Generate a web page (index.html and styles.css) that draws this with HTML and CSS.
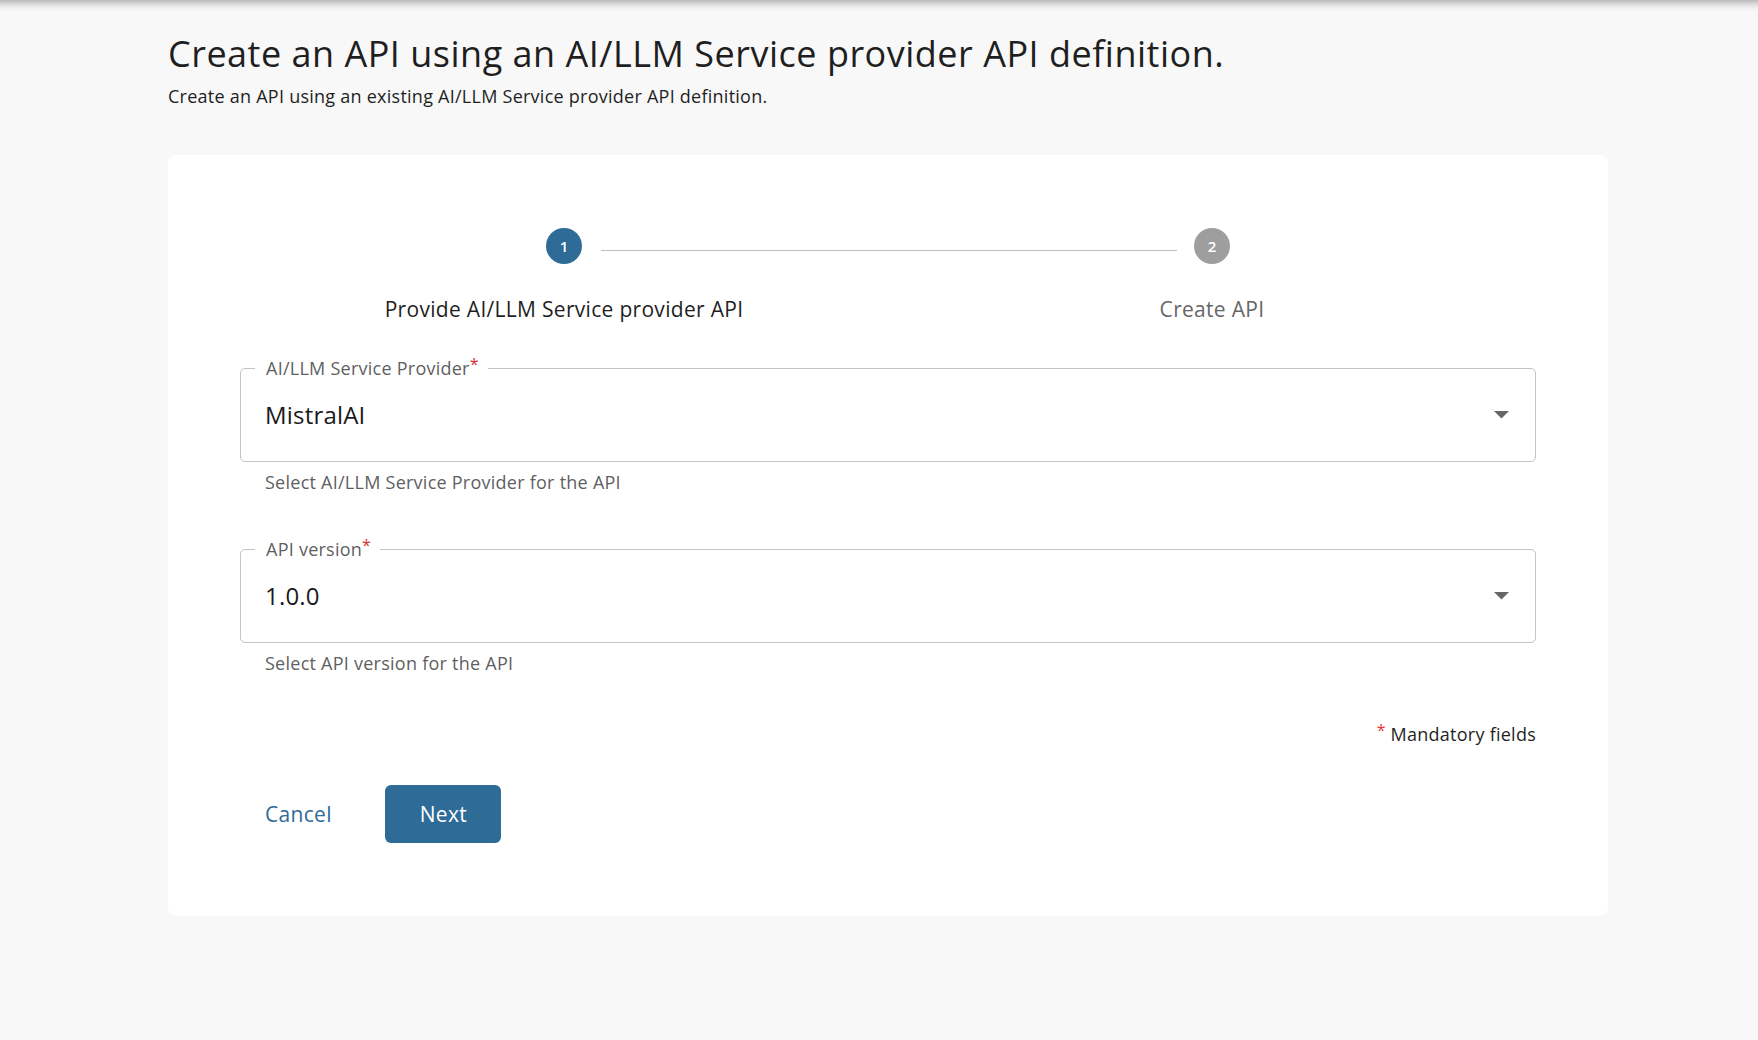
FILE: index.html
```html
<!DOCTYPE html>
<html lang="en">
<head>
<meta charset="utf-8">
<title>Create an API using an AI/LLM Service provider API definition</title>
<link rel="stylesheet" href="styles.css">
</head>
<body>
<div class="top-shade"></div>
<main class="page">
  <h1 class="title">Create an API using an AI/LLM Service provider API definition.</h1>
  <p class="subtitle">Create an API using an existing AI/LLM Service provider API definition.</p>

  <section class="card">
    <div class="stepper">
      <div class="step-icons">
        <span class="spacer"></span>
        <span class="step-circle active">1</span>
        <span class="connector"></span>
        <span class="step-circle">2</span>
        <span class="spacer"></span>
      </div>
      <div class="step-labels">
        <span class="step-label active">Provide AI/LLM Service provider API</span>
        <span class="step-label">Create API</span>
      </div>
    </div>

    <form class="form">
      <div class="field">
        <fieldset class="outline">
          <legend class="field-label">AI/LLM Service Provider<span class="req">*</span></legend>
          <div class="select-row">
            <span class="select-value">MistralAI</span>
            <svg class="caret" width="15" height="8" viewBox="0 0 15 8"><path d="M0 0 H15 L7.5 7.5 Z" fill="#666"/></svg>
          </div>
        </fieldset>
        <p class="helper">Select AI/LLM Service Provider for the API</p>
      </div>

      <div class="field">
        <fieldset class="outline">
          <legend class="field-label">API version<span class="req">*</span></legend>
          <div class="select-row">
            <span class="select-value">1.0.0</span>
            <svg class="caret" width="15" height="8" viewBox="0 0 15 8"><path d="M0 0 H15 L7.5 7.5 Z" fill="#666"/></svg>
          </div>
        </fieldset>
        <p class="helper">Select API version for the API</p>
      </div>

      <p class="mandatory"><span class="req-note">*</span> Mandatory fields</p>

      <div class="actions">
        <button type="button" class="btn-text">Cancel</button>
        <button type="button" class="btn-primary">Next</button>
      </div>
    </form>
  </section>
</main>
</body>
</html>
```

FILE: styles.css
```css
* { box-sizing: border-box; }

html, body {
  margin: 0;
  padding: 0;
  background: #f8f8f8;
  font-family: "Open Sans", "Noto Sans", "Liberation Sans", sans-serif;
  color: #212121;
}

.top-shade {
  height: 12px;
  background: linear-gradient(to bottom, #b9b9b9 0%, #dcdcdc 35%, #f1f1f1 70%, #f8f8f8 100%);
}

.page {
  padding: 22px 150px 0 168px;
}

.title {
  margin: 0;
  font-size: 36px;
  line-height: 40px;
  letter-spacing: 0.5px;
  font-weight: 400;
  color: #1f1f1f;
}

.subtitle {
  margin: 10px 0 0;
  font-size: 18px;
  line-height: 24px;
  letter-spacing: 0.25px;
  color: #1f1f1f;
}

.card {
  margin-top: 47px;
  background: #fff;
  border-radius: 8px;
  padding: 73px 72px 73px 72px;
}

/* stepper */
.step-icons {
  display: grid;
  grid-template-columns: 1fr 36px 2fr 36px 1fr;
  align-items: start;
}

.step-circle {
  width: 36px;
  height: 36px;
  border-radius: 50%;
  background: #9e9e9e;
  color: #fff;
  font-size: 15px;
  font-weight: 600;
  display: flex;
  align-items: center;
  justify-content: center;
}

.step-circle.active {
  background: #2e6b97;
}

.connector {
  height: 1px;
  background: #bdbdbd;
  margin: 22px 17px 0 19px;
}

.step-labels {
  display: grid;
  grid-template-columns: 1fr 1fr;
  margin-top: 31px;
}

.step-label {
  text-align: center;
  font-size: 21px;
  line-height: 28px;
  letter-spacing: 0.3px;
  color: #666;
}

.step-label.active {
  color: #1f1f1f;
}

/* form */
.form {
  margin-top: 33px;
}

.field + .field {
  margin-top: 43px;
}

.outline {
  margin: 0;
  padding: 0 16px 0 14px;
  border: 1px solid #c4c4c4;
  border-radius: 5px;
  min-width: 0;
}

.field-label {
  padding: 0 9px 0 11px;
  font-size: 18px;
  line-height: 24px;
  letter-spacing: 0.25px;
  color: #5f5f5f;
}

.req {
  color: #d32f2f;
  font-size: 16px;
  vertical-align: 5px;
  line-height: 0;
}

.select-row {
  display: flex;
  align-items: center;
  justify-content: space-between;
  padding: 19px 10px 30px 10px;
}

.select-value {
  font-size: 24px;
  line-height: 32px;
  letter-spacing: 0.2px;
  color: #1a1a1a;
}

.caret {
  display: block;
}

.helper {
  margin: 8px 0 0 25px;
  font-size: 18px;
  line-height: 24px;
  letter-spacing: 0.25px;
  color: #5f5f5f;
}

.mandatory {
  margin: 47px 0 0;
  text-align: right;
  font-size: 18px;
  line-height: 24px;
  letter-spacing: 0.25px;
  color: #1f1f1f;
}

.req-note {
  color: #e53935;
  font-size: 16px;
  vertical-align: 5px;
  line-height: 0;
}

.actions {
  display: flex;
  align-items: center;
  margin-top: 39px;
}

.btn-text {
  font-family: inherit;
  font-size: 21px;
  line-height: 28px;
  letter-spacing: 0.3px;
  color: #2e6b97;
  background: none;
  border: none;
  padding: 0 24px 0 25px;
  margin-right: 29px;
  cursor: pointer;
}

.btn-primary {
  font-family: inherit;
  font-size: 21px;
  font-weight: 500;
  line-height: 28px;
  letter-spacing: 0.3px;
  color: #fff;
  background: #2e6b97;
  border: none;
  border-radius: 6px;
  height: 58px;
  padding: 0 34px 0 35px;
  cursor: pointer;
}
```
